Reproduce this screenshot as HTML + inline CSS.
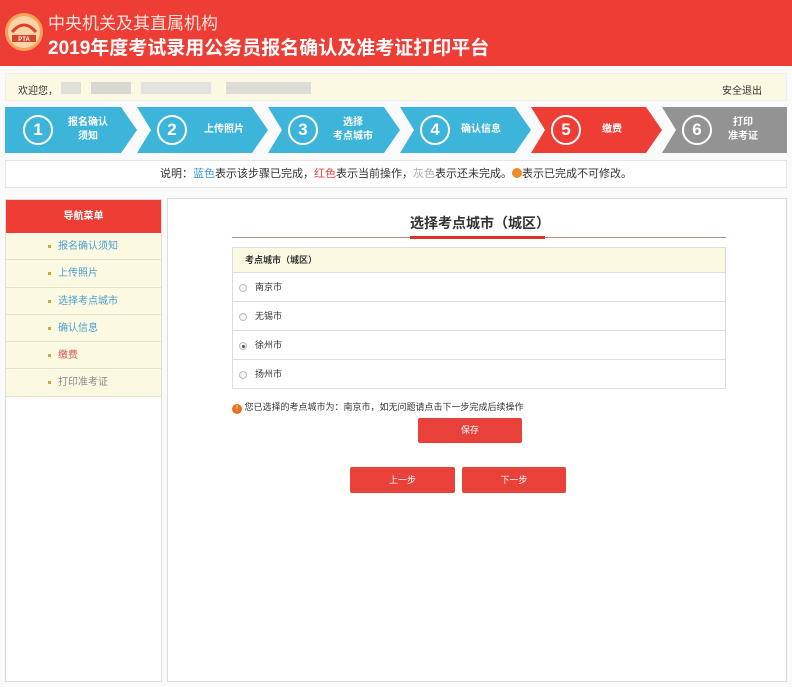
<!DOCTYPE html>
<html><head><meta charset="utf-8"><style>
*{margin:0;padding:0;box-sizing:border-box}
body{width:792px;height:687px;background:#fafafa;font-family:"Liberation Sans","Noto Sans CJK SC",sans-serif;position:relative;overflow:hidden;color:#333}
.abs{position:absolute}
#hdr{left:0;top:0;width:792px;height:66px;background:#ee3d35}
.t1{left:48px;top:9px;font-size:17px;color:#fbe3dc}
.t2{left:48px;top:33px;color:#fff;font-size:19px;font-weight:bold}
#wel{left:5px;top:73px;width:782px;height:28px;background:#fcf9e2;border:1px solid #eee;font-size:10px}
.step{top:107px;height:46px;color:#fff;font-size:10px;font-weight:bold}
.step svg{position:absolute;left:0;top:0}
.circ{position:absolute;left:18px;top:8px;width:30px;height:30px;border:2px solid #fff;border-radius:50%;text-align:center;line-height:26px;font-size:17px;font-weight:bold}
.lab{position:absolute;left:58px;top:0;height:46px;display:flex;align-items:center;width:50px;justify-content:center;text-align:center;line-height:14px}
#leg{left:5px;top:160px;width:782px;height:28px;background:#fff;border:1px solid #e5e5e5;font-size:11px;text-align:center;line-height:27px}
#side{left:5px;top:199px;width:157px;height:483px;background:#fff;border:1px solid #ddd}
#side .h{height:33px;background:#ee3d35;color:#fff;font-size:10px;text-align:center;line-height:33px;font-weight:bold}
#side .i{height:27.3px;background:#fcf9e2;border-bottom:1px solid #e6e2c8;font-size:10px;color:#4a9fd0;padding-left:40px;line-height:27px;position:relative}
#side .i:before{content:"";position:absolute;left:42px;top:12px;width:3px;height:3px;background:#c9a93a}
#side .i span{padding-left:12px}
#main{left:167px;top:198px;width:620px;height:484px;background:#fff;border:1px solid #ddd}
.row{left:232px;width:494px;border:1px solid #ddd;border-top:none;font-size:9px;background:#fff}
.radio{display:inline-block;width:8px;height:8px;border:1px solid #bbb;border-radius:50%;margin:0 8px 0 6px;vertical-align:middle;background:#f4f4f4;position:relative}
.btn{background:#e8413a;color:#fff;font-size:9px;text-align:center;border-radius:2px}
</style></head><body>
<div id="hdr" class="abs"></div>
<svg class="abs" style="left:4px;top:12px" width="40" height="40" viewBox="0 0 40 40"><circle cx="20" cy="20" r="19" fill="#f6a15a"/><circle cx="20" cy="20" r="16" fill="#fbd4a6"/><path d="M8 20 Q20 6 32 20" stroke="#d9432b" stroke-width="3" fill="none"/><rect x="8" y="23" width="24" height="7" fill="#d9432b"/><text x="20" y="29" font-size="6" fill="#fff" text-anchor="middle" font-weight="bold">PTA</text></svg>
<div class="abs t1">中央机关及其直属机构</div>
<div class="abs t2">2019年度考试录用公务员报名确认及准考证打印平台</div>
<div id="wel" class="abs"><span class="abs" style="left:12px;top:8px">欢迎您，</span>
<div class="abs" style="left:55px;top:8px;width:250px;height:12px;background:linear-gradient(90deg,#d9d9d6 0 8%,#fcf9e2 8% 12%,#cfcfcc 12% 28%,#fcf9e2 28% 32%,#ddd 32% 60%,#fcf9e2 60% 66%,#d5d5d2 66% 80%);opacity:.8"></div>
<span class="abs" style="right:24px;top:8px">安全退出</span></div>

<div class="abs step" style="left:5px;width:132px"><svg width="132" height="46"><polygon points="0,0 116,0 132,23 116,46 0,46" fill="#3db4da"/></svg><div class="circ">1</div><div class="lab">报名确认<br>须知</div></div>
<div class="abs step" style="left:137px;width:131px"><svg width="131" height="46"><polygon points="0,0 115,0 131,23 115,46 0,46 14,23" fill="#3db4da"/></svg><div class="circ" style="left:20px">2</div><div class="lab" style="left:62px">上传照片</div></div>
<div class="abs step" style="left:268px;width:132px"><svg width="132" height="46"><polygon points="0,0 116,0 132,23 116,46 0,46 14,23" fill="#3db4da"/></svg><div class="circ" style="left:20px">3</div><div class="lab" style="left:60px">选择<br>考点城市</div></div>
<div class="abs step" style="left:400px;width:131px"><svg width="131" height="46"><polygon points="0,0 115,0 131,23 115,46 0,46 14,23" fill="#3db4da"/></svg><div class="circ" style="left:20px">4</div><div class="lab" style="left:56px">确认信息</div></div>
<div class="abs step" style="left:531px;width:131px"><svg width="131" height="46"><polygon points="0,0 115,0 131,23 115,46 0,46 14,23" fill="#ee3d35"/></svg><div class="circ" style="left:20px">5</div><div class="lab" style="left:56px">缴费</div></div>
<div class="abs step" style="left:662px;width:125px"><svg width="125" height="46"><polygon points="0,0 125,0 125,46 0,46 14,23" fill="#939393"/></svg><div class="circ" style="left:20px">6</div><div class="lab" style="left:56px">打印<br>准考证</div></div>

<div id="leg" class="abs">说明：<span style="color:#3a9ed0">蓝色</span>表示该步骤已完成，<span style="color:#e8413a">红色</span>表示当前操作，<span style="color:#aaa">灰色</span>表示还未完成。<span style="display:inline-block;width:10px;height:10px;border-radius:50%;background:#f08a24;vertical-align:-1px"></span>表示已完成不可修改。</div>

<div id="side" class="abs"><div class="h">导航菜单</div>
<div class="i"><span>报名确认须知</span></div>
<div class="i"><span>上传照片</span></div>
<div class="i"><span>选择考点城市</span></div>
<div class="i"><span>确认信息</span></div>
<div class="i" style="color:#d9534f"><span>缴费</span></div>
<div class="i" style="color:#888"><span>打印准考证</span></div>
</div>
<div id="main" class="abs"></div>
<div class="abs" style="left:410px;top:213px;font-size:14px;font-weight:bold;color:#333">选择考点城市（城区）</div>
<div class="abs" style="left:232px;top:237px;width:494px;height:1px;background:#b88"></div>
<div class="abs" style="left:410px;top:236px;width:135px;height:3px;background:#d9322c"></div>
<div class="abs" style="left:232px;top:247px;width:494px;height:26px;background:#fcf9e2;border:1px solid #ddd;font-size:9px;font-weight:bold;line-height:24px;padding-left:12px">考点城市（城区）</div>
<div class="abs row" style="top:273px;height:29px;line-height:28px"><span class="radio"></span>南京市</div>
<div class="abs row" style="top:302px;height:29px;line-height:28px"><span class="radio"></span>无锡市</div>
<div class="abs row" style="top:331px;height:29px;line-height:28px"><span class="radio"><i style="position:absolute;left:2px;top:2px;width:3px;height:3px;background:#555;border-radius:50%"></i></span>徐州市</div>
<div class="abs row" style="top:360px;height:29px;line-height:28px"><span class="radio"></span>扬州市</div>
<div class="abs" style="left:232px;top:400px;font-size:9px;color:#333"><span style="display:inline-block;width:10px;height:10px;border-radius:50%;background:#e8701e;color:#fff;font-size:8px;text-align:center;line-height:10px;vertical-align:-1px">!</span> 您已选择的考点城市为：南京市，如无问题请点击下一步完成后续操作</div>
<div class="abs btn" style="left:418px;top:418px;width:104px;height:25px;line-height:25px">保存</div>
<div class="abs btn" style="left:350px;top:467px;width:105px;height:26px;line-height:26px">上一步</div>
<div class="abs btn" style="left:462px;top:467px;width:104px;height:26px;line-height:26px">下一步</div>
</body></html>
